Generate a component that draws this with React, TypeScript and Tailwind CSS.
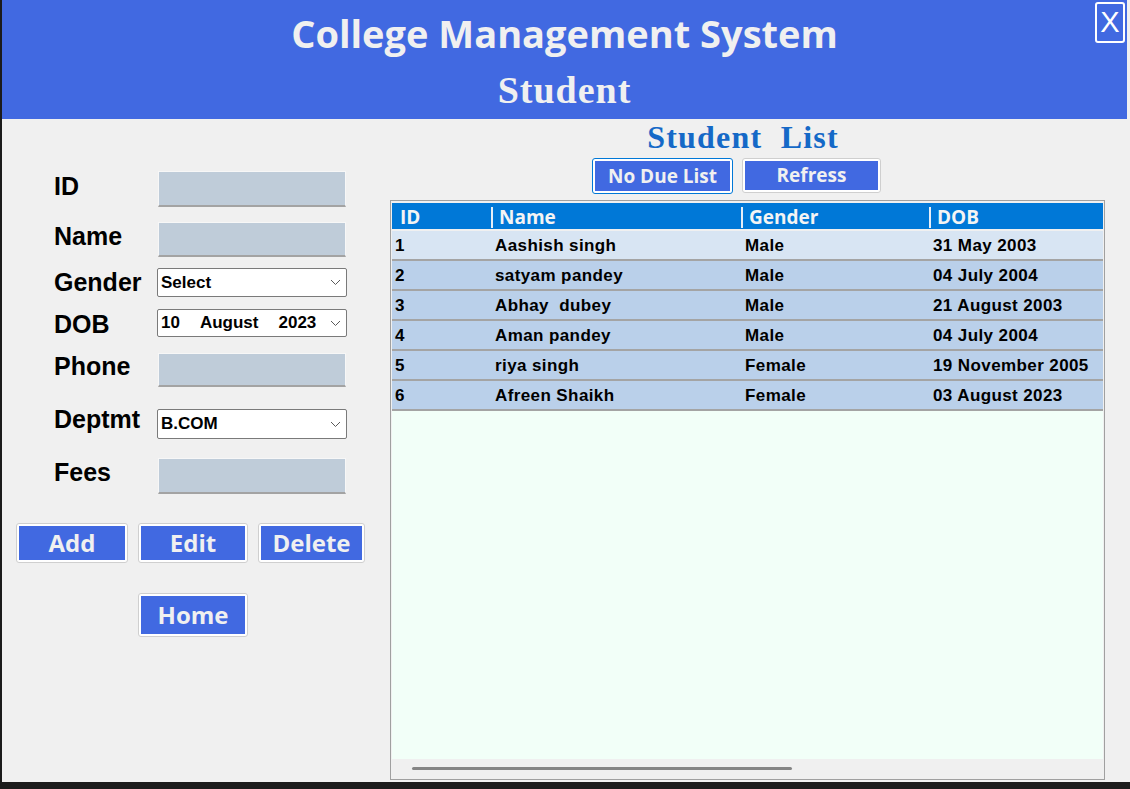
import React from "react";

/**
 * Student screen of the College Management System
 */

const students = [
  { id: 1, name: "Aashish singh", gender: "Male", dob: "31 May 2003" },
  { id: 2, name: "satyam pandey", gender: "Male", dob: "04 July 2004" },
  { id: 3, name: "Abhay  dubey", gender: "Male", dob: "21 August 2003" },
  { id: 4, name: "Aman pandey", gender: "Male", dob: "04 July 2004" },
  { id: 5, name: "riya singh", gender: "Female", dob: "19 November 2005" },
  { id: 6, name: "Afreen Shaikh", gender: "Female", dob: "03 August 2023" },
];

const sans = "font-['Open_Sans',sans-serif]";
const arial = "font-['Liberation_Sans',Arial,sans-serif]";
const serif = "font-['Liberation_Serif','Times_New_Roman',serif]";

function Chevron() {
  return (
    <svg width="11" height="7" viewBox="0 0 11 7" className="mr-[5px] shrink-0">
      <polyline points="1,1 5.5,5.5 10,1" fill="none" stroke="#5a5a5a" strokeWidth="1" />
    </svg>
  );
}

function Box() {
  return (
    <div className="ml-[1px] w-[188px] h-full bg-[#bfccd9] border border-[#f7f7f7] border-b-2 border-b-[#a3a3a3]" />
  );
}

function Select({ children }: { children: React.ReactNode }) {
  return (
    <div className={`w-[190px] h-full bg-white border border-[#7a7a7a] rounded-[2px] flex items-center justify-between pl-[3px] ${arial} font-bold text-[17px] text-black`}>
      <div className="flex items-center">{children}</div>
      <Chevron />
    </div>
  );
}

function Label({ children, className = "" }: { children: React.ReactNode; className?: string }) {
  return (
    <div className={`w-[103px] ${arial} font-bold text-[25px] leading-none text-black ${className}`}>
      {children}
    </div>
  );
}

function FormButton({ label, className }: { label: string; className: string }) {
  return (
    <div className={`rounded-[3px] border border-[#cfcfcf] bg-white p-[2px] ${className}`}>
      <div className={`h-full bg-[#4169e1] flex items-center justify-center text-[#f0f0f0] font-bold text-[24px] ${sans}`}>
        {label}
      </div>
    </div>
  );
}

export default function App() {
  return (
    <div className="w-[1130px] h-[789px] bg-[#1b1b1b] flex overflow-hidden">
      <div className="ml-[2px] w-[1128px] h-[782px] bg-[#f0f0f0] flex flex-col">
        {/* Header */}
        <div className="relative h-[119px] mr-[3px] bg-[#4169e1] flex flex-col items-center text-[#f0f0f0]">
          <div className={`mt-[14px] text-[38px] leading-[38px] font-bold ${sans}`}>
            College Management System
          </div>
          <div className={`mt-[19px] text-[38px] leading-[38px] font-bold tracking-[1px] ${serif}`}>
            Student
          </div>
          <div className="absolute top-[2px] right-[2px] w-[30px] h-[41px] border-2 border-white rounded-[3px] flex items-center justify-center">
            <span className={`text-[29px] leading-none text-white ${arial}`}>X</span>
          </div>
        </div>

        {/* Body */}
        <div className="flex flex-1 min-h-0">
          {/* Form */}
          <div className="w-[388px] flex flex-col">
            <div className="mt-[52px] h-[36px] pl-[52px] flex items-center">
              <Label className="mb-[6px]">ID</Label>
              <Box />
            </div>
            <div className="mt-[15px] h-[35px] pl-[52px] flex items-center">
              <Label className="mb-[7px]">Name</Label>
              <Box />
            </div>
            <div className="mt-[11px] h-[29px] pl-[52px] flex items-center">
              <Label>Gender</Label>
              <Select>Select</Select>
            </div>
            <div className="mt-[12px] h-[28px] pl-[52px] flex items-center">
              <Label className="mt-[2px]">DOB</Label>
              <Select>
                <span>10</span>
                <span className="ml-[20px]">August</span>
                <span className="ml-[20px]">2023</span>
              </Select>
            </div>
            <div className="mt-[16px] h-[34px] pl-[52px] flex items-center">
              <Label className="mb-[8px]">Phone</Label>
              <Box />
            </div>
            <div className="mt-[22px] h-[30px] pl-[52px] flex items-center">
              <Label className="mb-[10px]">Deptmt</Label>
              <Select>B.COM</Select>
            </div>
            <div className="mt-[19px] h-[36px] pl-[52px] flex items-center">
              <Label className="mb-[8px]">Fees</Label>
              <Box />
            </div>

            <div className="mt-[29px] pl-[14px] flex gap-[10px]">
              <FormButton label="Add" className="w-[112px] h-[40px]" />
              <FormButton label="Edit" className="w-[110px] h-[40px]" />
              <FormButton label="Delete" className="w-[107px] h-[40px]" />
            </div>
            <div className="mt-[30px] pl-[136px] flex">
              <FormButton label="Home" className="w-[110px] h-[44px]" />
            </div>
          </div>

          {/* Student list */}
          <div className="w-[715px] flex flex-col">
            <div className={`mt-[2px] pr-[9px] text-center text-[32px] leading-[32px] font-bold tracking-[1.2px] text-[#1569c7] whitespace-pre ${serif}`}>
              Student  List
            </div>
            <div className="mt-[5px] pr-[22px] flex justify-center gap-[9px]">
              <div className="w-[141px] h-[36px] rounded-[3px] border border-[#0078d7] bg-white p-[2px]">
                <div className={`h-full bg-[#4169e1] flex items-center justify-center text-[#f0f0f0] font-bold text-[19px] ${sans}`}>
                  No Due List
                </div>
              </div>
              <div className="w-[139px] h-[35px] rounded-[3px] border border-[#cfcfcf] bg-white p-[2px]">
                <div className={`h-full bg-[#4169e1] flex items-center justify-center text-[#f0f0f0] font-bold text-[19px] ${sans}`}>
                  Refress
                </div>
              </div>
            </div>

            <div className="mt-[6px] mb-[2px] flex-1 border border-[#a0a0a0] bg-[#f0f0f0] px-[1px] pt-[2px] flex flex-col">
              <div className={`h-[26px] bg-[#0078d7] grid grid-cols-[99px_250px_188px_174px] text-[#f4f4f4] font-bold text-[19px] ${sans}`}>
                <div className="flex items-center pl-[8px]">ID</div>
                {["Name", "Gender", "DOB"].map((h) => (
                  <div key={h} className="flex items-center">
                    <div className="w-[2px] h-[21px] bg-[#e6eef7]" />
                    <span className="pl-[6px]">{h}</span>
                  </div>
                ))}
              </div>
              <div className="h-[2px]" />
              {students.map((s, i) => (
                <div
                  key={s.id}
                  className={`h-[30px] pt-[1px] border-b-2 border-[#a4a4a4] grid grid-cols-[99px_250px_188px_174px] items-center text-black font-bold text-[17px] tracking-[0.4px] ${arial} ${
                    i === 0 ? "bg-[#d8e5f3]" : "bg-[#bad0ea]"
                  }`}
                >
                  <div className="pl-[3px]">{s.id}</div>
                  <div className="pl-[4px] whitespace-pre">{s.name}</div>
                  <div className="pl-[4px]">{s.gender}</div>
                  <div className="pl-[4px]">{s.dob}</div>
                </div>
              ))}
              <div className="flex-1 bg-[#f2fff8]" />
              <div className="h-[20px] bg-[#f0f0f0] pt-[8px] pl-[20px]">
                <div className="w-[380px] h-[3px] bg-[#858585] rounded-full" />
              </div>
            </div>
          </div>
        </div>
      </div>
    </div>
  );
}
